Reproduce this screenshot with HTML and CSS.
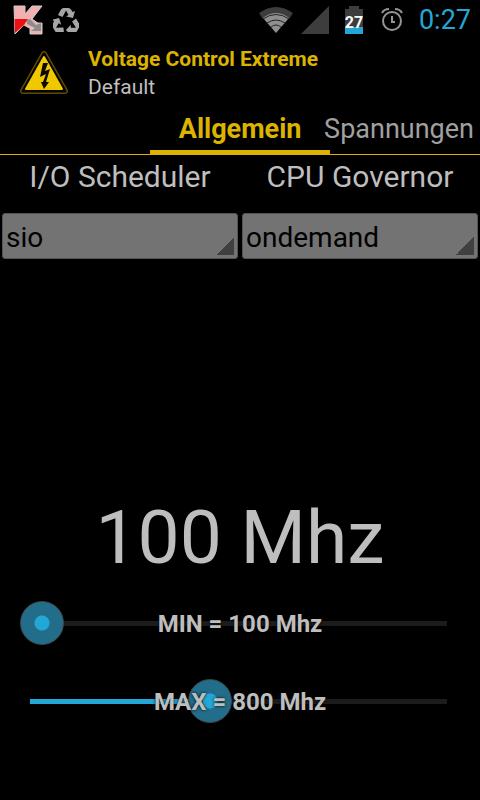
FILE: index.html
```html
<!DOCTYPE html>
<html lang="de">
<head>
    <meta charset="UTF-8">
    <meta name="viewport" content="width=device-width, initial-scale=1.0">
    <title>Voltage Control Extreme</title>
    <link rel="stylesheet" href="styles.css">
</head>
<body>

    <div class="status-bar">
        <svg class="notification" width="32" height="30" viewBox="0 0 32 30">
            <path d="M1 1H12V9L19 1H29L19 14L26 19V24H18L11 20L2 29Z" fill="#f4b0b0" stroke="#ccc" stroke-width="1"/>
            <path d="M1.500 14H15L11 20L2 28Z" fill="#ee1111"/>
            <path d="M17 24L23 22V18H29V29H17Z" fill="#f4b0b0" stroke="#ccc" stroke-width="1"/>
            <path d="M14 15L17 14L23 20L28 18V26H18L22 23L14 19Z" fill="#8c8c8c"/>
        </svg>
        <svg class="notification" width="26" height="24" viewBox="0 0 26 24">
            <g fill="#a6a6a6">
                <path id="arrow" d="M5 7L8 1.500Q9 0 10.500 0H15.500Q17 0 18 1.500L19.500 4L22 3L20 10L13 8.500L15.500 7L13 2.500L9.500 9Z"/>
                <path d="M5 7L8 1.500Q9 0 10.500 0H15.500Q17 0 18 1.500L19.500 4L22 3L20 10L13 8.500L15.500 7L13 2.500L9.500 9Z" transform="rotate(120 13 14)"/>
                <path d="M5 7L8 1.500Q9 0 10.500 0H15.500Q17 0 18 1.500L19.500 4L22 3L20 10L13 8.500L15.500 7L13 2.500L9.500 9Z" transform="rotate(240 13 14)"/>
            </g>
        </svg>
        <div class="system-icons">
            <svg width="34" height="26" viewBox="0 0 34 26">
                <path d="M0 6Q17 -6 34 6L30 12Q17 3 4 12Z" fill="#3d3d3d"/>
                <path d="M4 11Q17 1 30 11L17 26Z" fill="#8f8f8f"/>
                <path d="M4 12Q17 3 30 12M8 16Q17 10 26 16M12 20Q17 16 22 20" fill="none" stroke="#222" stroke-width="1"/>
            </svg>
            <svg width="28" height="28" viewBox="0 0 28 28">
                <path d="M28 0V28H0Z" fill="#3d3d3d"/>
            </svg>
            <svg class="battery" width="18" height="28" viewBox="0 0 18 28">
                <path d="M4 0H14V3H18V28H0V3H4Z" fill="#3d3d3d"/>
                <path d="M0 21H18V28H0Z" fill="#22a7d6"/>
                <text x="9" y="22" text-anchor="middle">27</text>
            </svg>
            <svg class="alarm" width="22" height="24" viewBox="0 0 22 24" fill="none" stroke="#959595" stroke-width="2">
                <circle cx="11" cy="13" r="9"/>
                <path d="M11 8V14H14M1 5Q3 1 8 1M21 5Q19 1 14 1"/>
            </svg>
        </div>
        <span class="clock">0:27</span>
    </div>

    <div class="app-header">
        <svg width="50" height="44" viewBox="0 0 50 44">
            <path d="M24 3L45 40H3Z" fill="#5d4b05" stroke="#5d4b05" stroke-width="6" stroke-linejoin="round"/>
            <path d="M24 3L45 40H3Z" fill="#050400" stroke="#050400" stroke-width="3" stroke-linejoin="round"/>
            <path d="M24 6L42 38H6Z" fill="#f0c800" stroke="#f0c800" stroke-width="2" stroke-linejoin="round"/>
            <path d="M23 12H28L25 20L30 18L26 31H29L24 38L21 31H23L26 23L20 26Z" fill="#0c0a00"/>
        </svg>
        <div class="titles">
            <h1>Voltage Control Extreme</h1>
            <p>Default</p>
        </div>
    </div>

    <nav class="tabs">
        <a href="#allgemein" class="tab active">Allgemein</a>
        <a href="#spannungen" class="tab">Spannungen</a>
    </nav>

    <main id="allgemein">
        <div class="selectors">
            <div class="selector">
                <label for="scheduler">I/O Scheduler</label>
                <select id="scheduler">
                    <option>sio</option>
                    <option>noop</option>
                    <option>deadline</option>
                </select>
            </div>
            <div class="selector">
                <label for="governor">CPU Governor</label>
                <select id="governor">
                    <option>ondemand</option>
                    <option>performance</option>
                    <option>powersave</option>
                </select>
            </div>
        </div>

        <div class="frequency">100 Mhz</div>

        <div class="slider">
            <input type="range" id="minFreq" min="100" max="1750" step="50" value="100" style="--fill: 0">
            <label for="minFreq">MIN = 100 Mhz</label>
        </div>
        <div class="slider">
            <input type="range" id="maxFreq" min="100" max="1750" step="50" value="800" style="--fill: 0.4242">
            <label for="maxFreq">MAX = 800 Mhz</label>
        </div>
    </main>

    <script>
        function updateSlider(input, name) {
            let fill = (input.value - input.min) / (input.max - input.min);
            input.style.setProperty("--fill", fill);
            input.nextElementSibling.innerText = name + " = " + input.value + " Mhz";
        }

        document.getElementById("minFreq").addEventListener("input", function () {
            updateSlider(this, "MIN");
        });
        document.getElementById("maxFreq").addEventListener("input", function () {
            updateSlider(this, "MAX");
        });
    </script>

</body>
</html>
```
FILE: styles.css
```css
* {
    box-sizing: border-box;
}
body {
    font-family: Roboto, sans-serif;
    background: #000;
    color: #bebebe;
    margin: 0;
    min-height: 100vh;
    display: flex;
    flex-direction: column;
}
.status-bar {
    display: flex;
    align-items: center;
    gap: 8px;
    height: 40px;
    padding: 0 9px 0 13px;
}
.system-icons {
    display: flex;
    align-items: center;
    gap: 8px;
    margin-left: auto;
}
.battery {
    margin: 0 8px;
}
.battery text {
    font-size: 16px;
    font-weight: bold;
    fill: #fff;
}
.alarm {
    margin: 0 2px;
}
.clock {
    color: #22a7d6;
    font-size: 27px;
    margin-left: 6px;
}
.app-header {
    display: flex;
    align-items: center;
    gap: 18px;
    height: 66px;
    padding: 0 20px;
}
.app-header h1 {
    color: #dcb400;
    font-size: 21px;
    line-height: 28px;
    margin: 0;
}
.app-header p {
    font-size: 21px;
    line-height: 28px;
    margin: 0;
}
.tabs {
    display: flex;
    justify-content: flex-end;
    height: 49px;
    padding-top: 2px;
    border-bottom: 1px solid #dcb400;
}
.tab {
    color: #a0a0a0;
    font-size: 27px;
    line-height: 42px;
    text-decoration: none;
    padding-right: 6px;
}
.tab.active {
    color: #dcb400;
    font-weight: bold;
    width: 180px;
    padding: 0;
    margin-right: -6px;
    text-align: center;
    border-bottom: 4px solid #dcb400;
}
main {
    flex: 1;
    display: flex;
    flex-direction: column;
    padding-bottom: 77px;
}
.selectors {
    display: flex;
}
.selector {
    flex: 1;
    min-width: 0;
    padding: 0 2px;
}
.selector label {
    display: block;
    font-size: 30px;
    line-height: 44px;
    text-align: center;
    margin-bottom: 14px;
}
.selector select {
    appearance: none;
    display: block;
    width: 100%;
    height: 46px;
    padding: 2px 3px 0;
    border: 1px solid #555;
    border-radius: 3px;
    background: linear-gradient(135deg, transparent 50%, #404040 50%) right 3px bottom 3px / 18px 18px no-repeat #737373;
    color: #000;
    font-family: inherit;
    font-size: 28px;
}
.frequency {
    font-size: 75px;
    line-height: 88px;
    text-align: center;
    margin-top: auto;
    margin-bottom: 20px;
}
.slider {
    position: relative;
    height: 44px;
    margin: 0 20px;
}
.slider + .slider {
    margin-top: 34px;
}
.slider label {
    position: absolute;
    inset: 0;
    font-size: 24px;
    font-weight: bold;
    line-height: 46px;
    text-align: center;
    text-shadow: 0 0 3px #000;
    pointer-events: none;
}
.slider input {
    appearance: none;
    display: block;
    width: 100%;
    height: 44px;
    margin: 0;
    background: none;
}
.slider input::-webkit-slider-runnable-track {
    height: 44px;
    background:
        linear-gradient(#22a7d6, #22a7d6) 10px center / calc((100% - 44px) * var(--fill) + 12px) 5px no-repeat,
        linear-gradient(#1c1c1c, #1c1c1c) 10px center / calc(100% - 23px) 5px no-repeat;
}
.slider input::-webkit-slider-thumb {
    appearance: none;
    width: 44px;
    height: 44px;
    border: 1px solid #40484c;
    border-radius: 50%;
    background: radial-gradient(circle, #22a7d6 7px, #216d8a 8px);
}
```
